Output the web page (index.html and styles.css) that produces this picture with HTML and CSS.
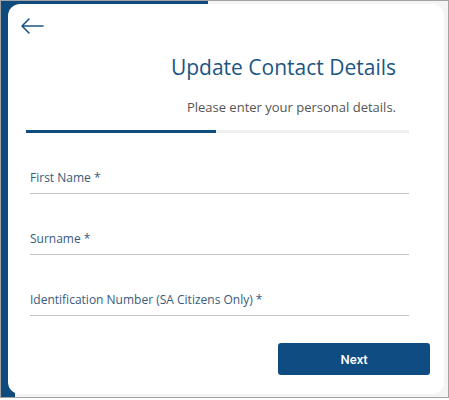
FILE: index.html
```html
<!DOCTYPE html>
<html lang="en">
<head>
    <meta charset="UTF-8">
    <meta name="viewport" content="width=device-width, initial-scale=1.0">
    <title>Update Contact Details</title>
    <link rel="stylesheet" href="styles.css">
</head>
<body>
    <!-- Outer frame with the blue edge behind the card -->
    <div class="frame">
        <div class="card">
            <!-- Back button -->
            <button class="back" type="button" aria-label="Back">
                <svg width="24" height="16" viewBox="0 0 24 16">
                    <path d="M23 8H2M9 1L2 8l7 7" fill="none" stroke="#1d5584" stroke-width="1.6" stroke-linecap="round" stroke-linejoin="round"/>
                </svg>
            </button>

            <!-- Title -->
            <header class="title-block">
                <h1>Update Contact Details</h1>
                <p class="subtitle">Please enter your personal details.</p>
            </header>

            <!-- Progress -->
            <div class="progress"><div class="progress-fill" style="width: 49.5%"></div></div>

            <!-- Form -->
            <form class="form">
                <label class="field">
                    <span class="field-label">First Name *</span>
                </label>
                <label class="field">
                    <span class="field-label">Surname *</span>
                </label>
                <label class="field">
                    <span class="field-label">Identification Number (SA Citizens Only) *</span>
                </label>
                <div class="actions">
                    <button type="submit" class="next">Next</button>
                </div>
            </form>
        </div>
    </div>
</body>
</html>
```

FILE: styles.css
```css
html, body {
    margin: 0;
    padding: 0;
    background-color: #fff;
}
.frame {
    width: 449px;
    height: 398px;
    box-sizing: border-box;
    border: 1px solid #a3a3a3;
    padding: 3px 4px 3px 7px;
    background:
        linear-gradient(#0e4a7c, #0e4a7c) left top / 207px 14px no-repeat,
        linear-gradient(#0e4a7c, #0e4a7c) left top / 14px 100% no-repeat,
        #f4f4f4;
}
.card {
    height: 100%;
    box-sizing: border-box;
    background-color: #fff;
    border-radius: 12px;
    padding: 14px 21px 0 18px;
    font-family: "Open Sans", sans-serif;
}
.back {
    display: block;
    background: none;
    border: none;
    padding: 0;
    margin: 0 0 0 -6px;
    cursor: pointer;
    height: 16px;
}
.title-block {
    text-align: right;
    padding-right: 27px;
}
h1 {
    margin: 20px 0 0;
    font-size: 21px;
    font-weight: 400;
    line-height: 26px;
    color: #1b5583;
}
.subtitle {
    margin: 18px 0 0;
    font-size: 13px;
    line-height: 18px;
    color: #555;
}
.progress {
    margin: 14px 14px 0 0;
    height: 3px;
    background-color: #efefef;
}
.progress-fill {
    height: 100%;
    background-color: #0f4c7f;
}
.form {
    padding: 0 14px 0 4px;
}
.field {
    display: block;
    border-bottom: 1.5px solid #c4c4c4;
    padding: 36px 0 6px;
}
.field-label {
    display: block;
    font-size: 12px;
    line-height: 18px;
    color: #385b7c;
}
.actions {
    display: flex;
    justify-content: flex-end;
    margin: 27px -21px 0 0;
}
.next {
    width: 152px;
    height: 32px;
    border: none;
    border-radius: 3px;
    background-color: #0f4c81;
    color: #fff;
    font-family: Roboto, sans-serif;
    font-size: 13px;
    font-weight: 500;
    cursor: pointer;
}
```
